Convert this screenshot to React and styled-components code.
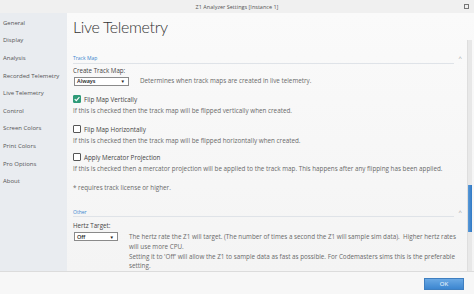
import React from 'react';
import styled, { createGlobalStyle } from 'styled-components';

const GlobalStyle = createGlobalStyle`
  html, body {
    margin: 0;
    padding: 0;
    background: #f3f3f3;
    overflow: hidden;
  }
  * { box-sizing: border-box; }
`;

const navItems = [
  'General',
  'Display',
  'Analysis',
  'Recorded Telemetry',
  'Live Telemetry',
  'Control',
  'Screen Colors',
  'Print Colors',
  'Pro Options',
  'About',
];

const Window = styled.div`
  width: 474px;
  height: 294px;
  display: flex;
  flex-direction: column;
  font-family: "Open Sans", "Noto Sans", sans-serif;
  color: #444;
  background: #f4f4f4;
`;

const TitleBar = styled.div`
  height: 13px;
  flex: none;
  display: flex;
  align-items: center;
  justify-content: center;
  position: relative;
  background: #f0f0f0;
  font-size: 5.5px;
  color: #555;
`;

const MaxButton = styled.span`
  position: absolute;
  right: 5px;
  top: 4px;
  width: 5px;
  height: 5px;
  border: 1px solid #777;
`;

const Main = styled.div`
  flex: 1;
  display: flex;
  min-height: 0;
  border-bottom: 1px solid #dcdcdc;
`;

const Nav = styled.nav`
  width: 67px;
  flex: none;
  background: #e9ecf0;
  display: flex;
  flex-direction: column;
  padding-top: 1px;
`;

const NavItem = styled.div`
  height: 17.6px;
  display: flex;
  align-items: center;
  padding-left: 3px;
  font-size: 6px;
  color: #555;
  white-space: nowrap;
`;

const Content = styled.div`
  flex: 1;
  display: flex;
  flex-direction: column;
  min-width: 0;
  background: linear-gradient(180deg, #fafafa 0%, #f4f4f4 100%);
`;

const Heading = styled.h1`
  margin: 0;
  height: 27px;
  flex: none;
  padding: 4px 0 0 6px;
  font-family: Lato, "Open Sans", sans-serif;
  font-weight: 300;
  font-size: 16px;
  letter-spacing: -0.35px;
  line-height: 20px;
  color: #333;
`;

const ScrollArea = styled.div`
  flex: 1;
  display: flex;
  min-height: 0;
`;

const Body = styled.div`
  flex: 1;
  padding: 15px 6px 0 6px;
  overflow: hidden;
`;

const Scrollbar = styled.div`
  width: 5px;
  flex: none;
  margin: 0 2px 0 1px;
  background: #e8e8e8;
  border-left: 1px solid #dedede;
  display: flex;
  flex-direction: column;
`;

const Thumb = styled.div`
  margin-top: ${p => p.$top}px;
  height: ${p => p.$height}px;
  background: linear-gradient(90deg, #5a9ad8, #2f78c4);
`;

const Section = styled.div`
  position: relative;
  margin-top: ${p => p.$mt || 0}px;
  margin-right: 6px;
`;

const SectionTitle = styled.div`
  font-size: 5px;
  line-height: 7px;
  padding-bottom: 0.5px;
  color: #3a86cf;
  border-bottom: 1px solid #dfe3e8;
`;

const Caret = styled.span`
  position: absolute;
  right: -8px;
  top: 0;
  font-size: 6px;
  line-height: 6px;
  color: #999;
`;

const Label = styled.div`
  margin-top: ${p => p.$mt || 0}px;
  font-size: 6.2px;
  line-height: 8px;
  color: #444;
`;

const Row = styled.div`
  display: flex;
  align-items: ${p => p.$align || 'center'};
  gap: ${p => p.$gap || 0}px;
  margin-top: ${p => p.$mt || 0}px;
`;

const Select = styled.div`
  width: ${p => p.$w}px;
  height: 9px;
  flex: none;
  margin-left: 1px;
  border: 1px solid #8a8a8a;
  background: #fff;
  display: flex;
  align-items: center;
  justify-content: space-between;
  padding: 0 3px 0 2px;
  font-size: 5.5px;
  font-weight: 600;
  color: #222;
`;

const Arrow = styled.span`
  font-size: 4.5px;
  color: #222;
`;

const Desc = styled.div`
  margin-top: ${p => p.$mt || 0}px;
  font-size: 6.3px;
  line-height: ${p => p.$lh || 8}px;
  color: #6a6a6a;
`;

const Check = styled.span`
  width: 8px;
  height: 8px;
  flex: none;
  display: flex;
  align-items: center;
  justify-content: center;
  border: 1px solid ${p => (p.$checked ? '#2f9a78' : '#555')};
  background: ${p => (p.$checked ? '#2f9a78' : '#fff')};
  border-radius: 1px;
`;

const CheckRow = styled(Row)`
  gap: 3px;
  font-size: 6.3px;
  line-height: 9px;
  color: #444;
`;

const Footer = styled.div`
  height: 22px;
  flex: none;
  display: flex;
  align-items: center;
  justify-content: flex-end;
  padding-right: 10px;
  background: #f7f7f7;
`;

const OkButton = styled.button`
  width: 40px;
  height: 12px;
  margin-top: 1px;
  border: 1px solid #3f7fc0;
  background: linear-gradient(180deg, #6aa9e4 0%, #3c86d0 100%);
  color: #fff;
  font-family: "Open Sans", sans-serif;
  font-size: 6px;
  padding: 0;
`;

const Tick = () => (
  <svg width="7" height="6" viewBox="0 0 7 6">
    <path d="M0.8 3.2 L2.7 5 L6.3 0.8" fill="none" stroke="#fff" strokeWidth="1.3" />
  </svg>
);

const CheckOption = ({ checked, label, desc, mt }) => (
  <>
    <CheckRow $mt={mt}>
      <Check $checked={checked}>{checked && <Tick />}</Check>
      {label}
    </CheckRow>
    <Desc $mt={3}>{desc}</Desc>
  </>
);

export default function App() {
  return (
    <>
      <GlobalStyle />
      <Window>
        <TitleBar>
          Z1 Analyzer Settings [Instance 1]
          <MaxButton />
        </TitleBar>
        <Main>
          <Nav>
            {navItems.map(item => (
              <NavItem key={item}>{item}</NavItem>
            ))}
          </Nav>
          <Content>
            <Heading>Live Telemetry</Heading>
            <ScrollArea>
              <Body>
                <Section>
                  <SectionTitle>Track Map</SectionTitle>
                  <Caret>^</Caret>
                </Section>
                <Label $mt={3}>Create Track Map:</Label>
                <Row $mt={2} $gap={11}>
                  <Select $w={55}>Always<Arrow>▼</Arrow></Select>
                  <Desc>Determines when track maps are created in live telemetry.</Desc>
                </Row>
                <CheckOption
                  mt={9}
                  checked
                  label="Flip Map Vertically"
                  desc="If this is checked then the track map will be flipped vertically when created."
                />
                <CheckOption
                  mt={10}
                  label="Flip Map Horizontally"
                  desc="If this is checked then the track map will be flipped horizontally when created."
                />
                <CheckOption
                  mt={8}
                  label="Apply Mercator Projection"
                  desc="If this is checked then a mercator projection will be applied to the track map. This happens after any flipping has been applied."
                />
                <Desc $mt={11}>* requires track license or higher.</Desc>
                <Section $mt={17}>
                  <SectionTitle>Other</SectionTitle>
                  <Caret>^</Caret>
                </Section>
                <Label $mt={5}>Hertz Target:</Label>
                <Row $mt={2} $gap={11} $align="flex-start">
                  <Select $w={44}>Off<Arrow>▼</Arrow></Select>
                  <Desc $lh={9.8}>
                    The hertz rate the Z1 will target. (The number of times a second the Z1 will sample sim data).&nbsp; Higher hertz rates will use more CPU.
                    <br />
                    Setting it to 'Off' will allow the Z1 to sample data as fast as possible. For Codemasters sims this is the preferable setting.
                  </Desc>
                </Row>
              </Body>
              <Scrollbar>
                <Thumb $top={145} $height={47} />
              </Scrollbar>
            </ScrollArea>
          </Content>
        </Main>
        <Footer>
          <OkButton>OK</OkButton>
        </Footer>
      </Window>
    </>
  );
}
